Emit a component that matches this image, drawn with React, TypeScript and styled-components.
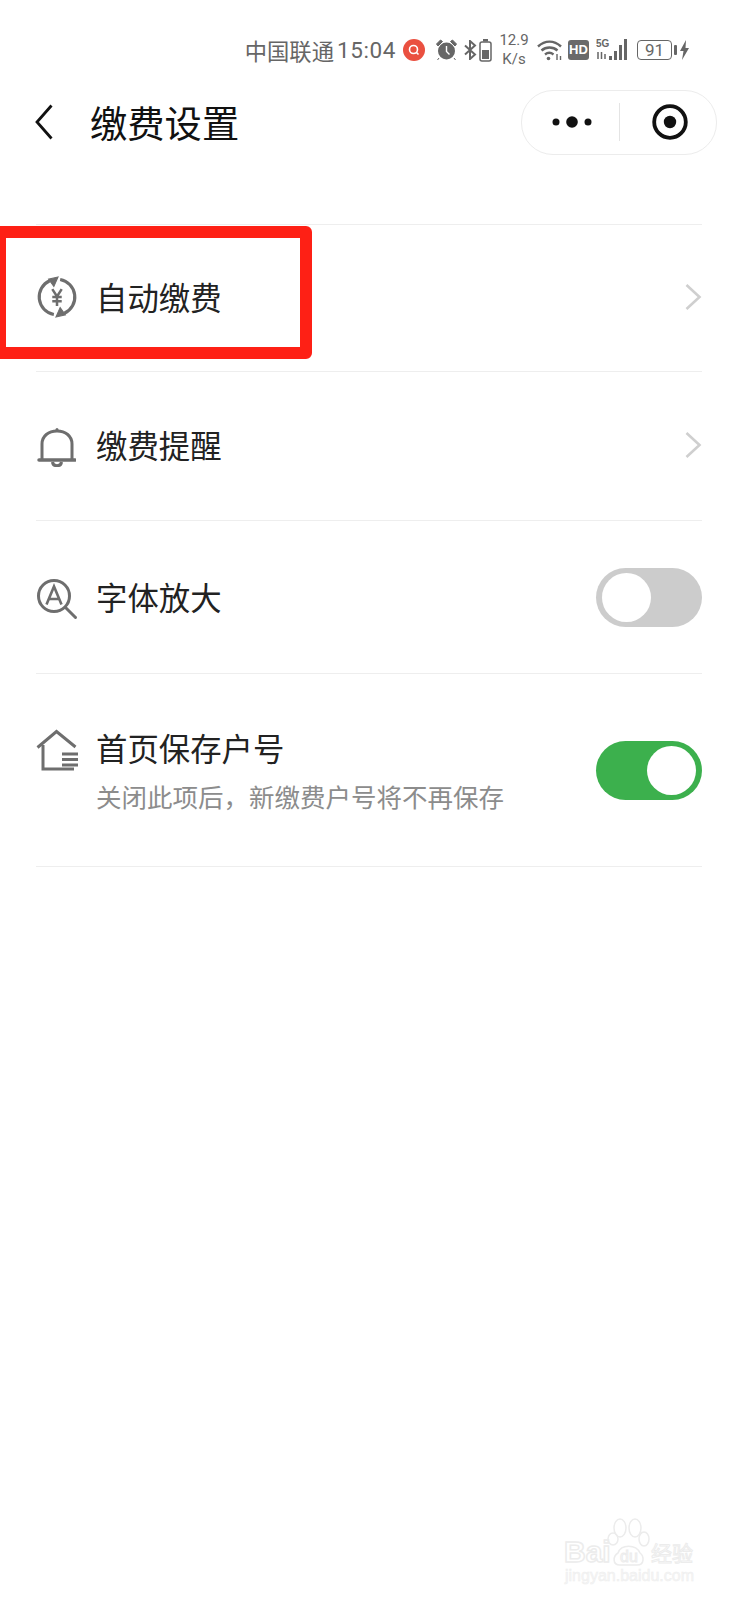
import { styled, createGlobalStyle } from "styled-components";

const GlobalStyle = createGlobalStyle`
  html, body {
    margin: 0;
    padding: 0;
    background: #fff;
  }
  body {
    font-family: "Noto Sans CJK SC", "Noto Sans", sans-serif;
  }
`;

const Page = styled.div`
  position: relative;
  width: 737px;
  height: 1600px;
  overflow: hidden;
  background: #fff;
`;

const StatusBar = styled.div`
  height: 84px;
  padding: 16px 48px 0 0;
  box-sizing: border-box;
  display: flex;
  justify-content: flex-end;
  align-items: center;
  color: #666;
`;

const Carrier = styled.span`
  font-size: 22.3px;
  line-height: 60px;
  margin-right: 3px;
`;

const Clock = styled.span`
  font-family: Roboto, sans-serif;
  font-size: 22.5px;
  letter-spacing: 0.6px;
  margin-right: 7px;
`;

const StatusIcon = styled.svg<{ $gap?: number }>`
  display: block;
  flex: none;
  margin-right: ${(p) => p.$gap ?? 0}px;
`;

const Speed = styled.div`
  width: 30px;
  margin: 0 8px 0 7px;
  font-family: Roboto, sans-serif;
  font-size: 15px;
  line-height: 19px;
  text-align: center;
`;

const HdBadge = styled.span`
  width: 21px;
  height: 20px;
  margin-right: 7px;
  border-radius: 3px;
  background: #6a6a6a;
  color: #fff;
  font-family: "Liberation Sans", sans-serif;
  font-size: 13px;
  font-weight: 700;
  line-height: 20px;
  text-align: center;
`;

const Level = styled.span`
  width: 33px;
  height: 18px;
  margin-right: 2px;
  border: 1.5px solid #666;
  border-radius: 4px;
  font-family: Roboto, sans-serif;
  font-size: 17px;
  line-height: 18px;
  text-align: center;
`;

const NavBar = styled.header`
  height: 76px;
  padding: 0 20px 0 35px;
  display: flex;
  align-items: center;
`;

const Title = styled.h1`
  margin: 0 0 0 37px;
  font-size: 37.3px;
  font-weight: 400;
  line-height: 50px;
  color: #111;
`;

const Capsule = styled.div`
  width: 194px;
  height: 63px;
  margin-left: auto;
  border: 1px solid #ececec;
  border-radius: 32px;
  display: flex;
  align-items: center;
`;

const CapsulePart = styled.div`
  flex: 1;
  height: 38px;
  padding-left: 5px;
  display: flex;
  align-items: center;
  justify-content: center;

  & + & {
    border-left: 1px solid #e4e4e4;
  }
`;

const Menu = styled.ul`
  list-style: none;
  margin: 64px 35px 0 36px;
  padding: 0;
  border-top: 1px solid #eee;
`;

const Row = styled.li<{ $height: number; $lift?: number }>`
  height: ${(p) => p.$height}px;
  padding-bottom: ${(p) => p.$lift ?? 0}px;
  box-sizing: border-box;
  border-bottom: 1px solid #eee;
  display: flex;
  align-items: center;
`;

const IconSlot = styled.div<{ $offset: number }>`
  width: 60px;
  margin-top: ${(p) => p.$offset}px;
  flex: none;
`;

const RowText = styled.div`
  flex: 1;
`;

const RowLabel = styled.div`
  font-size: 31.4px;
  line-height: 42px;
  color: #222;
`;

const RowHint = styled.div`
  margin-top: 9px;
  font-size: 25.5px;
  line-height: 36px;
  color: #8c8c8c;
`;

const Toggle = styled.div<{ $on?: boolean }>`
  width: 106px;
  height: 59px;
  padding: 5px 6px;
  box-sizing: border-box;
  border-radius: 30px;
  background: ${(p) => (p.$on ? "#3cb04d" : "#ccc")};
  display: flex;
  justify-content: ${(p) => (p.$on ? "flex-end" : "flex-start")};

  &::after {
    content: "";
    width: 49px;
    height: 49px;
    border-radius: 50%;
    background: #fff;
  }
`;

const Highlight = styled.div`
  position: absolute;
  left: -6px;
  top: 226px;
  width: 294px;
  height: 109px;
  border: 12px solid #fe2015;
  border-radius: 6px;
`;

const Watermark = styled.svg`
  position: absolute;
  left: 560px;
  top: 1515px;
`;

const Chevron = () => (
  <svg width="18" height="28" viewBox="0 0 18 28" fill="none">
    <path d="M2.5 2l13 12-13 12" stroke="#cfcfcf" strokeWidth="2.6" />
  </svg>
);

const YenIcon = () => (
  <svg width="42" height="42" viewBox="0 0 40 40" fill="none" stroke="#6e6e6e" strokeWidth="3">
    <path d="M17 36.7A17 17 0 0 1 13 4.5" />
    <path d="M23 3.3A17 17 0 0 1 27 35.5" />
    <path d="M21 1L12 3l5 7z" fill="#6e6e6e" strokeWidth="1" />
    <path d="M19 39l9-2-5-7z" fill="#6e6e6e" strokeWidth="1" />
    <path d="M15.5 12.5l4.5 7 4.500-7M20 19.5v9M15.5 20h9M15.5 24h9" strokeWidth="2.4" />
  </svg>
);

const BellIcon = () => (
  <svg width="40" height="40" viewBox="-2 0 40 40" fill="none" stroke="#6e6e6e" strokeWidth="3">
    <path d="M4 32V17C4 9 10.5 4 19 4s15 5 15 13v15" />
    <path d="M1 33h36" strokeWidth="3.5" strokeLinecap="round" />
    <path d="M14.5 35c.5 5 8.5 5 9 0" />
    <circle cx="19" cy="2.5" r="1.5" fill="#6e6e6e" strokeWidth="0" />
  </svg>
);

const FontIcon = () => (
  <svg width="42" height="42" viewBox="0 0 42 42" fill="none" stroke="#6e6e6e" strokeWidth="3">
    <circle cx="18" cy="18" r="15.5" />
    <path d="M10.5 26.5L18 8.5l7.5 18M13 21h10" strokeWidth="2.6" />
    <path d="M29.5 29.5l10 10" strokeLinecap="round" />
  </svg>
);

const HouseIcon = () => (
  <svg width="44" height="42" viewBox="0 0 44 42" fill="none" stroke="#6e6e6e" strokeWidth="3">
    <path d="M1.5 18.5L20.5 2.5l19 15.5" />
    <path d="M7 16v24h31" />
    <path d="M26 25h16M26 30.5h16M26 36h16" strokeWidth="3" />
  </svg>
);

const App = () => {
  return (
    <Page>
      <GlobalStyle />
      <StatusBar>
        <Carrier>中国联通</Carrier>
        <Clock>15:04</Clock>
        <StatusIcon width="22" height="22" viewBox="0 0 22 22" $gap={11}>
          <circle cx="11" cy="11" r="11" fill="#ea5040" />
          <circle cx="10.5" cy="10.5" r="4" fill="none" stroke="#fff" strokeWidth="1.6" />
          <path d="M13.5 13.5l2 2" stroke="#fff" strokeWidth="1.6" />
        </StatusIcon>
        <StatusIcon width="21" height="22" viewBox="0 0 21 22" $gap={7} fill="#666">
          <circle cx="10.5" cy="12" r="8.5" />
          <path d="M0.5 5l4-4 2 1.5-4.5 4.5zM20.5 5l-4-4-2 1.5 4.5 4.5zM3 19l-1.5 2M18 19l1.5 2" stroke="#666" />
          <path d="M10.5 7v5.5l3 3" fill="none" stroke="#fff" strokeWidth="1.4" />
        </StatusIcon>
        <StatusIcon width="13" height="20" viewBox="0 0 13 20" $gap={2} fill="none" stroke="#666" strokeWidth="2">
          <path d="M1 5.5l10 9-5 4.5V1l5 4.5-10 9" />
        </StatusIcon>
        <StatusIcon width="13" height="24" viewBox="0 0 13 24" fill="none">
          <rect x="1" y="4" width="11" height="19" rx="2" stroke="#666" strokeWidth="1.5" />
          <rect x="4" y="1" width="5" height="2.5" fill="#666" />
          <rect x="3" y="12" width="7" height="9" fill="#666" />
        </StatusIcon>
        <Speed>
          12.9
          <br />
          K/s
        </Speed>
        <StatusIcon width="25" height="22" viewBox="0 0 25 22" $gap={6} fill="none" stroke="#666" strokeWidth="2.4">
          <path d="M1 7.5c7-6.5 16-6.5 23 0M4.5 11.5c4.500-4 11.500-4 16 0M8 15.500c2.500-2 6-2 8.500 0" />
          <circle cx="11.5" cy="19.5" r="1.8" fill="#666" stroke="none" />
          <path d="M20 15v6M23.5 17v4" strokeWidth="1.4" />
        </StatusIcon>
        <HdBadge>HD</HdBadge>
        <StatusIcon width="34" height="24" viewBox="0 0 34 24" $gap={7} fill="#666">
          <text x="0" y="9" fontFamily="Liberation Sans, sans-serif" fontSize="10" fontWeight="700">
            5G
          </text>
          <path d="M2 21v-7M5.5 14v7M9 16v5" stroke="#666" strokeWidth="1.5" />
          <rect x="13" y="18" width="3" height="4" />
          <rect x="18" y="13" width="3" height="9" />
          <rect x="23" y="7" width="3" height="15" />
          <rect x="28" y="1" width="3" height="21" />
        </StatusIcon>
        <Level>91</Level>
        <StatusIcon width="3" height="10" viewBox="0 0 3 10" $gap={3}>
          <rect width="3" height="10" rx="1" fill="#666" />
        </StatusIcon>
        <StatusIcon width="9" height="20" viewBox="0 0 9 20" fill="#666">
          <path d="M6 0L0 11h3.5L2 20l7-12H5.5z" />
        </StatusIcon>
      </StatusBar>

      <NavBar>
        <svg width="18" height="36" viewBox="0 0 18 36" fill="none">
          <path d="M16.5 1.5L2 18l14.5 16.5" stroke="#111" strokeWidth="2.8" />
        </svg>
        <Title>缴费设置</Title>
        <Capsule>
          <CapsulePart>
            <svg width="42" height="14" viewBox="0 0 42 14" fill="#111">
              <circle cx="4" cy="7" r="3.5" />
              <circle cx="20" cy="7" r="5.8" />
              <circle cx="36" cy="7" r="3.5" />
            </svg>
          </CapsulePart>
          <CapsulePart>
            <svg width="36" height="36" viewBox="0 0 36 36" fill="none">
              <circle cx="18" cy="18" r="15.8" stroke="#111" strokeWidth="3.8" />
              <circle cx="18" cy="18" r="6.2" fill="#111" />
            </svg>
          </CapsulePart>
        </Capsule>
      </NavBar>

      <Menu>
        <Row $height={147} $lift={3}>
          <IconSlot $offset={6}>
            <YenIcon />
          </IconSlot>
          <RowText>
            <RowLabel>自动缴费</RowLabel>
          </RowText>
          <Chevron />
        </Row>
        <Row $height={149} $lift={2}>
          <IconSlot $offset={9}>
            <BellIcon />
          </IconSlot>
          <RowText>
            <RowLabel>缴费提醒</RowLabel>
          </RowText>
          <Chevron />
        </Row>
        <Row $height={153}>
          <IconSlot $offset={9}>
            <FontIcon />
          </IconSlot>
          <RowText>
            <RowLabel>字体放大</RowLabel>
          </RowText>
          <Toggle />
        </Row>
        <Row $height={193}>
          <IconSlot $offset={-36}>
            <HouseIcon />
          </IconSlot>
          <RowText>
            <RowLabel>首页保存户号</RowLabel>
            <RowHint>关闭此项后，新缴费户号将不再保存</RowHint>
          </RowText>
          <Toggle $on />
        </Row>
      </Menu>

      <Highlight />

      <Watermark width="140" height="72" viewBox="0 0 140 72" fill="none" stroke="#ececec" strokeWidth="1.5">
        <text x="4" y="47" fontFamily="Liberation Sans, sans-serif" fontSize="30" fontWeight="700" fill="#fff">
          Bai
        </text>
        <ellipse cx="60" cy="13" rx="6" ry="9" />
        <ellipse cx="75" cy="13" rx="6" ry="9" />
        <ellipse cx="53" cy="24" rx="5" ry="6" />
        <ellipse cx="84" cy="24" rx="5" ry="7" />
        <path d="M58 38c3-9 18-9 22 0 4 3 5 12-3 12H60c-8 0-7-9-2-12z" />
        <text x="60" y="47" fontFamily="Liberation Sans, sans-serif" fontSize="16" fill="#fff" strokeWidth="1">
          du
        </text>
        <text x="91" y="46" fontSize="21" fill="#fff" strokeWidth="1">
          经验
        </text>
        <text x="5" y="66" fontFamily="Liberation Sans, sans-serif" fontSize="16" fill="#f6f6f6" stroke="#eee" strokeWidth="0.5">
          jingyan.baidu.com
        </text>
      </Watermark>
    </Page>
  );
};

export default App;
